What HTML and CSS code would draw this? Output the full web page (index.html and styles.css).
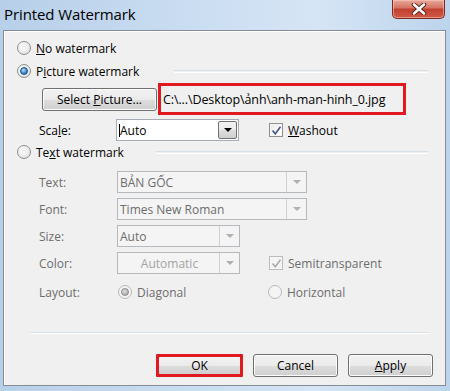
FILE: index.html
```html
<!DOCTYPE html>
<html lang="vi">

<head>
    <meta charset="UTF-8">
    <meta name="viewport" content="width=device-width, initial-scale=1.0">
    <link rel="stylesheet" href="styles.css">
    <title>Printed Watermark</title>
</head>

<body>
    <div class="window">
        <div class="titlebar">
            <span class="title">Printed Watermark</span>
            <button class="close-btn" aria-label="Close">
                <svg width="18" height="12" viewBox="0 0 18 12">
                    <path d="M4 1.5 L14 10.5 M14 1.5 L4 10.5" stroke="#5a1a14" stroke-width="4.4" stroke-linecap="round" />
                    <path d="M4 1.5 L14 10.5 M14 1.5 L4 10.5" stroke="#fff" stroke-width="2.6" stroke-linecap="round" />
                </svg>
            </button>
        </div>

        <div class="panel">
            <div class="opt-row first">
                <span class="radio"></span>
                <span class="opt-label"><u>N</u>o watermark</span>
            </div>

            <div class="opt-row">
                <span class="radio checked"><span class="dot"></span></span>
                <span class="opt-label">P<u>i</u>cture watermark</span>
                <span class="group-line picture-line"></span>
            </div>

            <div class="select-row">
                <button class="btn select-btn">Select <u>P</u>icture...</button>
                <div class="path-box">C:\...\Desktop\ảnh\anh-man-hinh_0.jpg</div>
            </div>

            <div class="field-row scale-row">
                <span class="field-label">Sca<u>l</u>e:</span>
                <div class="combo active w-short">
                    <span class="combo-text"><span class="caret"></span>Auto</span>
                    <span class="combo-btn"><span class="arrow"></span></span>
                </div>
                <span class="check"><svg width="11" height="11" viewBox="0 0 11 11"><path d="M1.5 5.5 L4.3 8.8 L9.5 1.8" fill="none" stroke="#4a5d8e" stroke-width="1.7" /></svg></span>
                <span class="check-label"><u>W</u>ashout</span>
            </div>

            <div class="opt-row text-opt">
                <span class="radio"></span>
                <span class="opt-label">Te<u>x</u>t watermark</span>
                <span class="group-line text-line"></span>
            </div>

            <div class="field-row disabled first-field">
                <span class="field-label">Text:</span>
                <div class="combo w-long">
                    <span class="combo-text">BẢN GỐC</span>
                    <span class="combo-btn"><span class="arrow"></span></span>
                </div>
            </div>

            <div class="field-row disabled">
                <span class="field-label">Font:</span>
                <div class="combo w-long">
                    <span class="combo-text">Times New Roman</span>
                    <span class="combo-btn"><span class="arrow"></span></span>
                </div>
            </div>

            <div class="field-row disabled">
                <span class="field-label">Size:</span>
                <div class="combo w-short">
                    <span class="combo-text">Auto</span>
                    <span class="combo-btn"><span class="arrow"></span></span>
                </div>
            </div>

            <div class="field-row disabled">
                <span class="field-label">Color:</span>
                <div class="combo w-short color-combo">
                    <span class="combo-text">Automatic</span>
                    <span class="combo-btn"><span class="arrow"></span></span>
                </div>
                <span class="check off"><svg width="11" height="11" viewBox="0 0 11 11"><path d="M1.5 5.5 L4.3 8.8 L9.5 1.8" fill="none" stroke="#a8a8a8" stroke-width="1.5" /></svg></span>
                <span class="check-label">Semitransparent</span>
            </div>

            <div class="field-row disabled layout-row">
                <span class="field-label layout-label">Layout:</span>
                <div class="layout-opt">
                    <span class="radio off checked"><span class="dot"></span></span>
                    <span class="opt-label">Diagonal</span>
                </div>
                <div class="layout-opt">
                    <span class="radio off"></span>
                    <span class="opt-label">Horizontal</span>
                </div>
            </div>

            <div class="bottom-line"></div>

            <div class="button-row">
                <button class="btn ok-btn">OK</button>
                <button class="btn">Cancel</button>
                <button class="btn apply-btn"><u>A</u>pply</button>
            </div>
        </div>
    </div>
</body>

</html>
```

FILE: styles.css
```css
body {
    margin: 0;
    padding: 0;
    font-family: "Open Sans", "Noto Sans", sans-serif;
    font-size: 12px;
    color: #000;
}

.window {
    width: 450px;
    height: 391px;
    background: linear-gradient(to right, #b7cfe9 0%, #c9dcf1 40%, #d6e5f5 70%, #bcd4ec 100%);
    overflow: hidden;
}

.titlebar {
    height: 30px;
    display: flex;
    justify-content: space-between;
    align-items: flex-start;
}

.title {
    margin: 4px 0 0 4px;
    font-size: 15px;
    letter-spacing: -0.1px;
}

.close-btn {
    width: 53px;
    height: 19px;
    margin-right: 5px;
    padding: 0;
    border: 1px solid #7d2a21;
    border-top: none;
    border-radius: 0 0 5px 5px;
    background: linear-gradient(#e8a899 0%, #d37262 45%, #c0402f 50%, #cf5a45 100%);
    box-shadow: inset 0 0 0 1px rgba(255, 210, 200, 0.5);
    display: flex;
    align-items: center;
    justify-content: center;
}

.panel {
    height: 356px;
    box-sizing: border-box;
    margin: 0 4px 0 3px;
    padding: 7px 12px 0 13px;
    background: #f0f0f0;
    border: 1px solid #858c93;
    box-shadow: inset 1px 1px 0 #fff;
}

/* option rows with radio buttons */
.opt-row {
    height: 20px;
    display: flex;
    align-items: center;
    margin-top: 3px;
}

.opt-row.first {
    margin-top: 0;
}

.opt-row.text-opt {
    margin-top: 1px;
}

.opt-label {
    margin-left: 5px;
}

.radio {
    width: 14px;
    height: 14px;
    box-sizing: border-box;
    border-radius: 50%;
    border: 1px solid #8b8e92;
    background: radial-gradient(circle at 40% 35%, #ffffff 0%, #ececec 55%, #cfcfcf 100%);
    display: flex;
    align-items: center;
    justify-content: center;
    flex-shrink: 0;
}

.radio .dot {
    width: 6px;
    height: 6px;
    border-radius: 50%;
    border: 1px solid #1c4f86;
    background: radial-gradient(circle at 40% 35%, #b9e1fb 0%, #3d8fd5 55%, #174f92 100%);
}

.radio.off {
    border-color: #b9b9b9;
    background: #f4f4f4;
}

.radio.off .dot {
    border-color: #8c8c8c;
    background: radial-gradient(circle at 40% 35%, #e0e0e0, #9a9a9a);
}

.group-line {
    flex: 1;
    height: 1px;
    border-top: 1px solid #d5dfe5;
    border-bottom: 1px solid #fff;
    margin-right: 5px;
}

.picture-line {
    margin-left: 35px;
}

.text-line {
    margin-left: 32px;
}

/* picture selection */
.select-row {
    height: 32px;
    margin-top: 2px;
    display: flex;
    align-items: center;
}

.btn {
    height: 23px;
    padding: 0;
    font-family: inherit;
    font-size: 12px;
    color: #000;
    border: 1px solid #707070;
    border-radius: 3px;
    background: linear-gradient(#f2f2f2 0%, #ebebeb 50%, #dddddd 51%, #cfcfcf 100%);
    box-shadow: inset 0 0 0 1px #fcfcfc;
}

.select-btn {
    width: 115px;
    margin-left: 25px;
}

.path-box {
    width: 248px;
    height: 32px;
    box-sizing: border-box;
    margin-left: 1px;
    padding-left: 2px;
    border: 3px solid #e11a22;
    display: flex;
    align-items: center;
    white-space: nowrap;
    font-size: 12.5px;
    letter-spacing: -0.1px;
}

/* labelled field rows */
.field-row {
    height: 22px;
    display: flex;
    align-items: center;
    margin-top: 5px;
}

.scale-row {
    margin-top: 4px;
}

.first-field {
    margin-top: 9px;
}

.field-label {
    width: 77px;
    margin-left: 22px;
    flex-shrink: 0;
}

.disabled .field-label {
    width: 78px;
    color: #6d6d6d;
}

.combo {
    height: 22px;
    box-sizing: border-box;
    display: flex;
    border: 1px solid #b5b8bd;
    background: #f4f4f4;
}

.combo.active {
    background: #fff;
    border-color: #a5acb5;
}

.w-short {
    width: 123px;
}

.w-long {
    width: 190px;
}

.combo-text {
    flex: 1;
    display: flex;
    align-items: center;
    padding-left: 2px;
    color: #6d6d6d;
}

.combo.active .combo-text {
    color: #000;
}

.color-combo .combo-text {
    justify-content: center;
    color: #a3a3a3;
}

.caret {
    width: 1px;
    height: 13px;
    background: #000;
}

.combo-btn {
    width: 19px;
    border-left: 1px solid #d0d0d0;
    display: flex;
    align-items: center;
    justify-content: center;
}

.combo.active .combo-btn {
    margin: 1px;
    width: 17px;
    border: 1px solid #707070;
    border-radius: 2px;
    background: linear-gradient(#f2f2f2 0%, #ebebeb 50%, #dddddd 51%, #cfcfcf 100%);
}

.arrow {
    width: 0;
    height: 0;
    border-left: 4px solid transparent;
    border-right: 4px solid transparent;
    border-top: 4px solid #b0b0b0;
}

.combo.active .arrow {
    border-top-color: #000;
}

.check {
    width: 14px;
    height: 14px;
    box-sizing: border-box;
    margin-left: 30px;
    border: 1px solid #8e8f8f;
    background: linear-gradient(135deg, #e4e4e4, #ffffff 70%);
    box-shadow: inset 0 0 0 1px #f6f6f6;
    display: flex;
    align-items: center;
    justify-content: center;
    flex-shrink: 0;
}

.check.off {
    margin-left: 29px;
    border-color: #bcbcbc;
    background: #f4f4f4;
}

.check-label {
    margin-left: 5px;
}

.disabled .check-label {
    color: #6d6d6d;
}

.layout-row {
    height: 20px;
    margin-top: 8px;
}

.layout-label {
    width: 79px !important;
}

.layout-opt {
    width: 150px;
    display: flex;
    align-items: center;
    color: #6d6d6d;
}

/* bottom buttons */
.bottom-line {
    height: 0;
    margin: 30px 5px 0 13px;
    border-top: 1px solid #d5dfe5;
    border-bottom: 1px solid #fff;
}

.button-row {
    display: flex;
    justify-content: flex-end;
    margin-top: 20px;
}

.button-row .btn {
    width: 85px;
    margin-left: 10px;
}

.ok-btn {
    width: 87px !important;
    border: 3px solid #e11a22;
    border-radius: 1px;
    box-shadow: none;
}

.button-row .apply-btn {
    margin-left: 10px;
}
```
